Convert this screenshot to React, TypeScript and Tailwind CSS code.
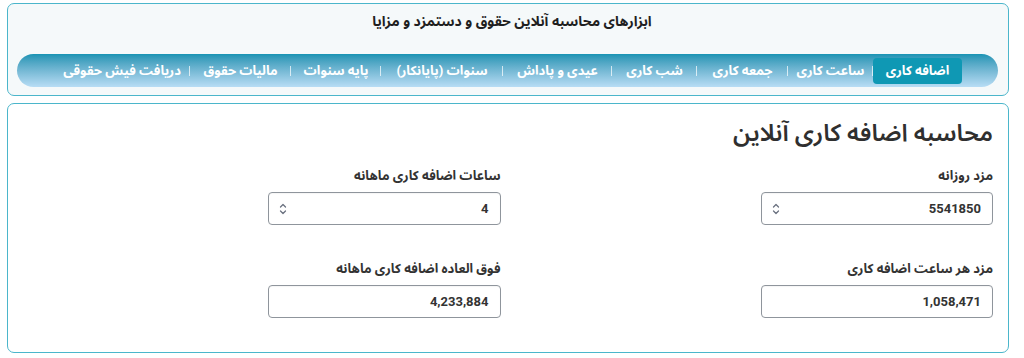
import React from "react";

const FONT = 'Roboto, "Noto Sans Arabic", "DejaVu Sans", sans-serif';

const tabs: { label: string; w: string; active?: boolean }[] = [
  { label: "اضافه کاری", w: "w-[89px]", active: true },
  { label: "ساعت کاری", w: "w-[85px]" },
  { label: "جمعه کاری", w: "w-[91px]" },
  { label: "شب کاری", w: "w-[85px]" },
  { label: "عیدی و پاداش", w: "w-[109px]" },
  { label: "سنوات (پایانکار)", w: "w-[122px]" },
  { label: "پایه سنوات", w: "w-[90px]" },
  { label: "مالیات حقوق", w: "w-[101px]" },
  { label: "دریافت فیش حقوقی", w: "w-[136px]" },
];

function Spinner() {
  return (
    <svg width="8" height="14" viewBox="0 0 8 14" fill="none" stroke="#6b7280" strokeWidth="1.3" strokeLinecap="round" strokeLinejoin="round">
      <path d="M1.5 5 L4 2.5 L6.5 5" />
      <path d="M1.5 9 L4 11.5 L6.5 9" />
    </svg>
  );
}

function Field({ label, value, spinner, col }: { label: string; value: string; spinner?: boolean; col: string }) {
  return (
    <div className={`${col} flex flex-col`}>
      <div className="text-[13px] font-bold leading-[20px] text-[#333] mb-[6px]">{label}</div>
      <div className="h-[33px] rounded-[4px] border border-[#8f959c] bg-white flex items-center justify-between pr-[11px] pl-[10px] shadow-[inset_0_1px_1px_rgba(0,0,0,0.04)]">
        <span className="text-[13px] font-bold text-[#333]" dir="ltr">{value}</span>
        {spinner ? <Spinner /> : <span />}
      </div>
    </div>
  );
}

export default function App() {
  return (
    <div dir="rtl" className="w-[1024px] h-[358px] bg-white pt-[3px] pl-[7px] pr-[15px] overflow-hidden" style={{ fontFamily: FONT }}>
      {/* Top tools card */}
      <div className="w-full h-[93px] rounded-[7px] border border-[#4bb6cb] bg-[#f5f9fa] pt-[7px] flex flex-col">
        <div className="text-center text-[14px] font-bold leading-[20px] text-[#1f1f1f] pl-[8px]">
          ابزارهای محاسبه آنلاین حقوق و دستمزد و مزایا
        </div>
        <div className="mt-[23px] mr-[10px] ml-[9px] h-[33px] rounded-full bg-linear-to-b from-[#1794b4] to-[#b8ddf5] flex items-center pr-[36px]">
          {tabs.map((t, i) => (
            <React.Fragment key={t.label}>
              <div
                className={`${t.w} shrink-0 h-[26px] flex items-center justify-center text-[13px] font-bold text-white whitespace-nowrap ${
                  t.active ? "bg-[#0f98b4] rounded-[4px]" : ""
                }`}
              >
                {t.label}
              </div>
              {i < tabs.length - 1 && <div className="w-px h-[10px] bg-white/70 shrink-0 -ml-px" />}
            </React.Fragment>
          ))}
        </div>
      </div>

      {/* Calculator card */}
      <div className="mt-[7px] w-full h-[250px] rounded-[7px] border border-[#4bb6cb] bg-white pt-[13px] pr-[15px] pl-[14px]">
        <h1 className="text-[24px] font-semibold leading-[32px] text-[#2f2f2f]">محاسبه اضافه کاری آنلاین</h1>
        <div className="mt-[17px] grid grid-cols-4 gap-x-[14px] gap-y-[34px]">
          <Field col="col-start-1" label="مزد روزانه" value="5541850" spinner />
          <Field col="col-start-3" label="ساعات اضافه کاری ماهانه" value="4" spinner />
          <Field col="col-start-1" label="مزد هر ساعت اضافه کاری" value="1,058,471" />
          <Field col="col-start-3" label="فوق العاده اضافه کاری ماهانه" value="4,233,884" />
        </div>
      </div>
    </div>
  );
}
